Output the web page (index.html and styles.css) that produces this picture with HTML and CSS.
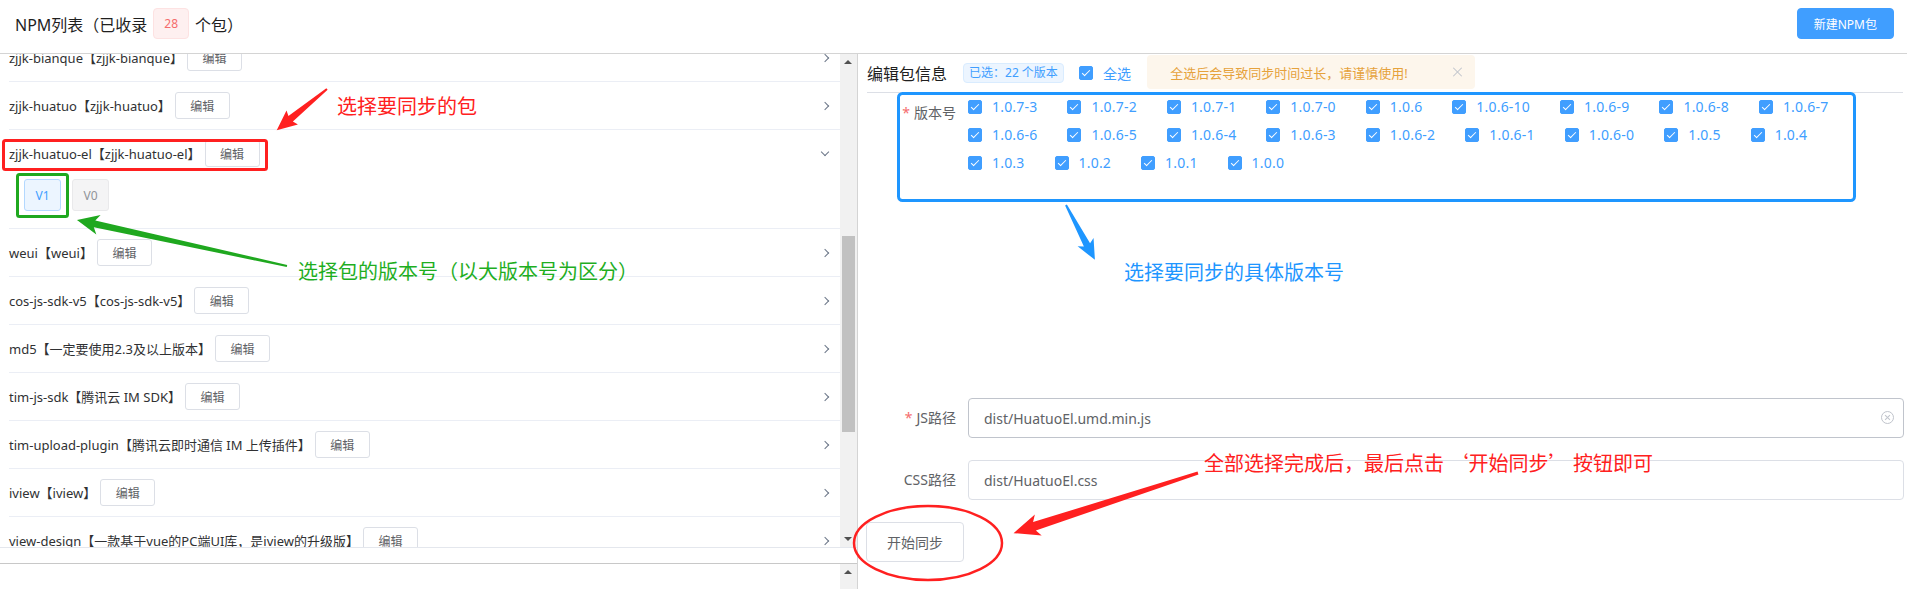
FILE: index.html
```html
<!DOCTYPE html>
<html lang="zh-CN">
<head>
    <meta charset="UTF-8">
    <title>NPM列表</title>
    <link rel="stylesheet" href="styles.css">
</head>
<body>
    <header class="topbar">
        <div class="page-title">NPM列表（已收录<span class="count-tag">28</span>个包）</div>
        <button class="btn btn-primary btn-small">新建NPM包</button>
    </header>

    <div class="main">
        <aside class="pkg-pane">
            <div class="pkg-scroll">
                <div class="pkg-list">
                    <div class="pkg-list-inner">
                        <div class="pkg-item">
                            <div class="pkg-head"><span class="pkg-name">zjjk-bianque【zjjk-bianque】</span><button class="btn-edit">编辑</button><i class="chev"></i></div>
                        </div>
                        <div class="pkg-item">
                            <div class="pkg-head"><span class="pkg-name">zjjk-huatuo【zjjk-huatuo】</span><button class="btn-edit">编辑</button><i class="chev"></i></div>
                        </div>
                        <div class="pkg-item is-open">
                            <div class="pkg-head"><span class="pkg-name">zjjk-huatuo-el【zjjk-huatuo-el】</span><button class="btn-edit">编辑</button><i class="chev"></i></div>
                            <div class="pkg-body">
                                <button class="ver-btn active">V1</button>
                                <button class="ver-btn">V0</button>
                            </div>
                        </div>
                        <div class="pkg-item">
                            <div class="pkg-head"><span class="pkg-name">weui【weui】</span><button class="btn-edit">编辑</button><i class="chev"></i></div>
                        </div>
                        <div class="pkg-item">
                            <div class="pkg-head"><span class="pkg-name">cos-js-sdk-v5【cos-js-sdk-v5】</span><button class="btn-edit">编辑</button><i class="chev"></i></div>
                        </div>
                        <div class="pkg-item">
                            <div class="pkg-head"><span class="pkg-name">md5【一定要使用2.3及以上版本】</span><button class="btn-edit">编辑</button><i class="chev"></i></div>
                        </div>
                        <div class="pkg-item">
                            <div class="pkg-head"><span class="pkg-name">tim-js-sdk【腾讯云 IM SDK】</span><button class="btn-edit">编辑</button><i class="chev"></i></div>
                        </div>
                        <div class="pkg-item">
                            <div class="pkg-head"><span class="pkg-name">tim-upload-plugin【腾讯云即时通信 IM 上传插件】</span><button class="btn-edit">编辑</button><i class="chev"></i></div>
                        </div>
                        <div class="pkg-item">
                            <div class="pkg-head"><span class="pkg-name">iview【iview】</span><button class="btn-edit">编辑</button><i class="chev"></i></div>
                        </div>
                        <div class="pkg-item">
                            <div class="pkg-head"><span class="pkg-name">view-design【一款基于vue的PC端UI库，是iview的升级版】</span><button class="btn-edit">编辑</button><i class="chev"></i></div>
                        </div>
                    </div>
                </div>
                <div class="vscroll">
                    <span class="sb-arrow up"></span>
                    <span class="sb-thumb"></span>
                    <span class="sb-fill"></span>
                    <span class="sb-arrow down"></span>
                </div>
            </div>
            <div class="pkg-gap"></div>
            <div class="pkg-lower">
                <div class="vscroll">
                    <span class="sb-arrow up"></span>
                    <span class="sb-fill"></span>
                </div>
            </div>
        </aside>

        <section class="edit-pane">
            <div class="edit-head">
                <h2 class="edit-title">编辑包信息</h2>
                <span class="sel-tag">已选：22 个版本</span>
                <label class="cb checked all"><span class="cb-box"></span><span class="cb-text">全选</span></label>
                <div class="alert">
                    <span>全选后会导致同步时间过长，请谨慎使用!</span>
                    <i class="alert-close"></i>
                </div>
            </div>

            <div class="form">
                <div class="form-item">
                    <label class="form-label"><em>*</em>版本号</label>
                    <div class="form-content">
                        <div class="cb-group">
                            <label class="cb checked"><span class="cb-box"></span><span class="cb-text">1.0.7-3</span></label>
                            <label class="cb checked"><span class="cb-box"></span><span class="cb-text">1.0.7-2</span></label>
                            <label class="cb checked"><span class="cb-box"></span><span class="cb-text">1.0.7-1</span></label>
                            <label class="cb checked"><span class="cb-box"></span><span class="cb-text">1.0.7-0</span></label>
                            <label class="cb checked"><span class="cb-box"></span><span class="cb-text">1.0.6</span></label>
                            <label class="cb checked"><span class="cb-box"></span><span class="cb-text">1.0.6-10</span></label>
                            <label class="cb checked"><span class="cb-box"></span><span class="cb-text">1.0.6-9</span></label>
                            <label class="cb checked"><span class="cb-box"></span><span class="cb-text">1.0.6-8</span></label>
                            <label class="cb checked"><span class="cb-box"></span><span class="cb-text">1.0.6-7</span></label>
                            <label class="cb checked"><span class="cb-box"></span><span class="cb-text">1.0.6-6</span></label>
                            <label class="cb checked"><span class="cb-box"></span><span class="cb-text">1.0.6-5</span></label>
                            <label class="cb checked"><span class="cb-box"></span><span class="cb-text">1.0.6-4</span></label>
                            <label class="cb checked"><span class="cb-box"></span><span class="cb-text">1.0.6-3</span></label>
                            <label class="cb checked"><span class="cb-box"></span><span class="cb-text">1.0.6-2</span></label>
                            <label class="cb checked"><span class="cb-box"></span><span class="cb-text">1.0.6-1</span></label>
                            <label class="cb checked"><span class="cb-box"></span><span class="cb-text">1.0.6-0</span></label>
                            <label class="cb checked"><span class="cb-box"></span><span class="cb-text">1.0.5</span></label>
                            <label class="cb checked"><span class="cb-box"></span><span class="cb-text">1.0.4</span></label>
                            <label class="cb checked"><span class="cb-box"></span><span class="cb-text">1.0.3</span></label>
                            <label class="cb checked"><span class="cb-box"></span><span class="cb-text">1.0.2</span></label>
                            <label class="cb checked"><span class="cb-box"></span><span class="cb-text">1.0.1</span></label>
                            <label class="cb checked"><span class="cb-box"></span><span class="cb-text">1.0.0</span></label>
                        </div>
                    </div>
                </div>

                <div class="form-item path-item">
                    <label class="form-label"><em>*</em>JS路径</label>
                    <div class="form-content">
                        <div class="input hover">
                            <input type="text" value="dist/HuatuoEl.umd.min.js">
                            <i class="input-clear"></i>
                        </div>
                    </div>
                </div>

                <div class="form-item">
                    <label class="form-label">CSS路径</label>
                    <div class="form-content">
                        <div class="input">
                            <input type="text" value="dist/HuatuoEl.css">
                        </div>
                    </div>
                </div>

                <button class="btn btn-sync">开始同步</button>
            </div>
        </section>
    </div>

    <!-- annotations drawn over the screenshot -->
    <svg class="marks" width="1907" height="589" viewBox="0 0 1907 589">
        <rect x="3.5" y="140.5" width="263" height="29" rx="2" fill="none" stroke="#ff2020" stroke-width="3"/>
        <rect x="17.5" y="174.5" width="50" height="42" rx="2" fill="none" stroke="#1fa81f" stroke-width="3"/>
        <rect x="898.5" y="93.5" width="956" height="107" rx="4" fill="none" stroke="#1e96ff" stroke-width="3"/>
        <ellipse cx="928" cy="543" rx="74" ry="37" fill="none" stroke="#ff2020" stroke-width="2.5"/>
        <path transform="translate(327 89) rotate(140.65)" fill="#ff2020" d="M0,-1 L47,-3.5 L45,-9 L65,0 L45,9 L47,3.5 L0,1 Z"/>
        <path transform="translate(287 266) rotate(192.36)" fill="#1fa81f" d="M0,-1 L197,-3.5 L193,-10 L215,0 L193,10 L197,3.5 L0,1 Z"/>
        <path transform="translate(1066 205) rotate(62.2)" fill="#1e96ff" d="M0,-1 L45,-3.5 L42,-9 L62,0 L42,9 L45,3.5 L0,1 Z"/>
        <path transform="translate(1198 473) rotate(161.94)" fill="#ff2020" d="M0,-1.5 L172,-4.5 L168,-11 L194,0 L168,11 L172,4.5 L0,1.5 Z"/>
    </svg>
    <div class="note note-red note-pkg">选择要同步的包</div>
    <div class="note note-green note-ver">选择包的版本号（以大版本号为区分）</div>
    <div class="note note-blue note-sub">选择要同步的具体版本号</div>
    <div class="note note-red note-sync">全部选择完成后，最后点击 ‘开始同步’ 按钮即可</div>
</body>
</html>
```

FILE: styles.css
```css
* {
    box-sizing: border-box;
}

body {
    margin: 0;
    width: 1907px;
    height: 589px;
    overflow: hidden;
    position: relative;
    font-family: "Noto Sans", "Noto Sans CJK SC", sans-serif;
    color: #303133;
    background: #fff;
}

button {
    font-family: inherit;
    cursor: pointer;
}

/* header */
.topbar {
    height: 54px;
    display: flex;
    align-items: center;
    justify-content: space-between;
    padding: 0 13px 6px 15px;
    border-bottom: 1px solid #d4d4d4;
}

.page-title {
    font-size: 16px;
    color: #1f1f1f;
    display: flex;
    align-items: center;
}

.count-tag {
    display: inline-block;
    height: 31px;
    line-height: 29px;
    padding: 0 10px;
    margin: 0 6px;
    font-size: 12px;
    color: #f56c6c;
    background: #fef0f0;
    border: 1px solid #fde2e2;
    border-radius: 4px;
}

.btn {
    border: 1px solid #dcdfe6;
    background: #fff;
    color: #606266;
    border-radius: 4px;
}

.btn-primary {
    background: #409eff;
    border-color: #409eff;
    color: #fff;
}

.btn-small {
    height: 31px;
    padding: 0 16px;
    font-size: 12px;
}

.main {
    display: flex;
    height: 535px;
}

/* package list */
.pkg-pane {
    width: 858px;
    flex-shrink: 0;
    border-right: 1px solid #d4d4d4;
    display: flex;
    flex-direction: column;
}

.pkg-scroll {
    height: 493px;
    display: flex;
}

.pkg-list {
    flex: 1;
    overflow: hidden;
    padding-left: 9px;
}

.pkg-list-inner {
    margin-top: -20px;
}

.pkg-head {
    height: 48px;
    display: flex;
    align-items: center;
    border-bottom: 1px solid #ebeef5;
    padding-right: 12px;
    font-size: 13px;
    color: #303133;
}

.is-open .pkg-head {
    border-bottom-color: transparent;
}

.btn-edit {
    width: 55px;
    height: 27px;
    margin-left: 4px;
    font-size: 12px;
    color: #606266;
    background: #fff;
    border: 1px solid #dcdfe6;
    border-radius: 3px;
    padding: 0;
}

.chev {
    margin-left: auto;
    width: 6px;
    height: 6px;
    border-right: 1px solid #6b7688;
    border-top: 1px solid #6b7688;
    transform: rotate(45deg);
}

.is-open .chev {
    transform: translateY(-2px) rotate(135deg);
}

.pkg-body {
    display: flex;
    gap: 11px;
    padding: 1px 0 17px 15px;
    border-bottom: 1px solid #ebeef5;
}

.ver-btn {
    width: 37px;
    height: 32px;
    padding: 0;
    font-size: 12px;
    color: #909399;
    background: #f4f4f5;
    border: 1px solid #e9e9eb;
    border-radius: 3px;
}

.ver-btn.active {
    color: #409eff;
    background: #ecf5ff;
    border-color: #b3d8ff;
}

/* fake scrollbars */
.vscroll {
    width: 17px;
    background: #f1f1f1;
    display: flex;
    flex-direction: column;
    align-items: center;
}

.sb-arrow {
    height: 17px;
    width: 17px;
    position: relative;
}

.sb-arrow::after {
    content: "";
    position: absolute;
    left: 4px;
    border-left: 4px solid transparent;
    border-right: 4px solid transparent;
}

.sb-arrow.up::after {
    top: 6px;
    border-bottom: 4px solid #505050;
}

.sb-arrow.down::after {
    top: 7px;
    border-top: 4px solid #505050;
}

.sb-thumb {
    width: 13px;
    height: 196px;
    margin-top: 165px;
    background: #c1c1c1;
}

.sb-fill {
    flex: 1;
}

.pkg-gap {
    height: 17px;
    border-top: 1px solid #e4e7ed;
    border-bottom: 1px solid #c8c8c8;
}

.pkg-lower {
    flex: 1;
    display: flex;
    justify-content: flex-end;
}

/* edit pane */
.edit-pane {
    flex: 1;
    padding: 0 3px 0 9px;
}

.edit-head {
    height: 39px;
    display: flex;
    align-items: center;
    border-bottom: 1px solid #dcdfe6;
    margin-right: 1px;
}

.edit-title {
    margin: 0;
    font-size: 16px;
    font-weight: normal;
    color: #1f1f1f;
}

.sel-tag {
    margin-left: 16px;
    height: 20px;
    line-height: 18px;
    padding: 0 5px;
    font-size: 12px;
    color: #409eff;
    background: #ecf5ff;
    border: 1px solid #d9ecff;
    border-radius: 4px;
}

.cb.all {
    margin-left: 15px;
    margin-right: 0;
}

.alert {
    margin-left: 16px;
    width: 328px;
    height: 34px;
    padding: 0 12px 0 23px;
    display: flex;
    align-items: center;
    justify-content: space-between;
    background: #fdf6ec;
    color: #e6a23c;
    font-size: 13px;
    border-radius: 4px;
    align-self: flex-start;
    margin-top: 1px;
}

.alert-close {
    width: 10px;
    height: 10px;
    position: relative;
}

.alert-close::before,
.alert-close::after {
    content: "";
    position: absolute;
    left: 4px;
    top: -1px;
    width: 1px;
    height: 12px;
    background: #c0c4cc;
    transform: rotate(45deg);
}

.alert-close::after {
    transform: rotate(-45deg);
}

/* checkbox */
.cb {
    display: inline-flex;
    align-items: center;
    margin-right: 30px;
    font-size: 14px;
    color: #606266;
}

.cb-box {
    width: 14px;
    height: 14px;
    border: 1px solid #dcdfe6;
    border-radius: 2px;
    position: relative;
}

.cb.checked .cb-box {
    background: #409eff;
    border-color: #409eff;
}

.cb.checked .cb-box::after {
    content: "";
    position: absolute;
    left: 4px;
    top: 1px;
    width: 3px;
    height: 7px;
    border: 1px solid #fff;
    border-left: 0;
    border-top: 0;
    transform: rotate(45deg);
}

.cb-text {
    padding-left: 10px;
    letter-spacing: 0.2px;
}

.cb.checked .cb-text {
    color: #409eff;
}

/* form */
.form-item {
    display: flex;
    margin-bottom: 22px;
}

.path-item {
    margin-top: 221px;
}

.form-label {
    width: 101px;
    flex-shrink: 0;
    padding-right: 12px;
    text-align: right;
    line-height: 40px;
    font-size: 14px;
    color: #606266;
}

.form-label em {
    font-style: normal;
    color: #f56c6c;
    margin-right: 4px;
}

.form-content {
    flex: 1;
}

.cb-group {
    display: flex;
    flex-wrap: wrap;
    line-height: 28px;
}

.input {
    position: relative;
}

.input input {
    width: 100%;
    height: 40px;
    padding: 0 15px;
    font-family: inherit;
    font-size: 14px;
    color: #606266;
    border: 1px solid #dcdfe6;
    border-radius: 4px;
    outline: none;
}

.input.hover input {
    border-color: #c0c4cc;
}

.input-clear {
    position: absolute;
    right: 10px;
    top: 13px;
    width: 13px;
    height: 13px;
    border: 1px solid #c0c4cc;
    border-radius: 50%;
}

.input-clear::before,
.input-clear::after {
    content: "";
    position: absolute;
    left: 5px;
    top: 2px;
    width: 1px;
    height: 7px;
    background: #c0c4cc;
    transform: rotate(45deg);
}

.input-clear::after {
    transform: rotate(-45deg);
}

.btn-sync {
    width: 98px;
    height: 40px;
    margin-left: -1px;
    font-size: 14px;
}

/* annotations */
.marks {
    position: absolute;
    left: 0;
    top: 0;
    pointer-events: none;
}

.note {
    position: absolute;
    font-family: "Noto Sans CJK SC", sans-serif;
    font-size: 20px;
    line-height: 24px;
    white-space: nowrap;
}

.note-red {
    color: #ff2020;
}

.note-green {
    color: #1fae1f;
}

.note-blue {
    color: #1e96ff;
}

.note-pkg {
    left: 337px;
    top: 94px;
}

.note-ver {
    left: 298px;
    top: 259px;
}

.note-sub {
    left: 1124px;
    top: 260px;
}

.note-sync {
    left: 1204px;
    top: 451px;
}
```
